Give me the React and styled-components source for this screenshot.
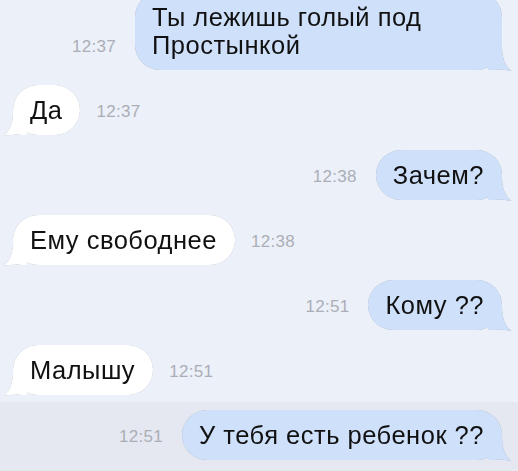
import styled, { createGlobalStyle } from 'styled-components';

const GlobalStyle = createGlobalStyle`
  html, body {
    margin: 0;
    padding: 0;
    background: #e5e8f0;
  }

  body {
    font-family: 'Liberation Sans', Arial, sans-serif;
  }
`;

const Screen = styled.div`
  display: flex;
  flex-direction: column;
  height: 471px;
  overflow: hidden;
`;

const Thread = styled.div`
  display: flex;
  flex-direction: column;
  gap: 15px;
  margin-top: -8px;
  padding: 0 16px 7px 13px;
  background: #ecf0f9;
`;

const Band = styled.div`
  flex: 1;
  display: flex;
  flex-direction: column;
  padding: 8px 16px 0 13px;
  background: #e5e8f0;
`;

const Row = styled.div`
  display: flex;
  align-items: flex-end;
  justify-content: ${({ $out }) => ($out ? 'flex-end' : 'flex-start')};
  gap: ${({ $out }) => ($out ? '19px' : '16px')};
`;

const Bubble = styled.div`
  position: relative;
  box-sizing: border-box;
  max-width: 367px;
  padding: 11px 18px 11px 17px;
  border-radius: 25px;
  font-size: 25.5px;
  line-height: 28px;
  letter-spacing: 0.5px;
  color: #111111;
  background: ${({ $out }) => ($out ? '#cfe0fa' : '#ffffff')};
  filter: drop-shadow(0 0 0.6px rgba(70, 80, 100, 0.45));
`;

const TailSvg = styled.svg`
  position: absolute;
  bottom: -1px;
  ${({ $out }) => ($out ? 'right: -10px;' : 'left: -10px; transform: scaleX(-1);')}
  width: 24px;
  height: 24px;
`;

const Time = styled.span`
  margin-bottom: 13px;
  font-size: 17px;
  line-height: 20px;
  letter-spacing: 0.3px;
  color: #abaeb6;
  white-space: nowrap;
`;

const Tail = ({ out }) => (
  <TailSvg $out={out} viewBox="0 0 24 24">
    <path
      d="M0 0 H14 C14 11 17 19 23.5 24 C18 23.6 12 21.8 6 23 L0 23 Z"
      fill={out ? '#cfe0fa' : '#ffffff'}
    />
  </TailSvg>
);

const Message = ({ out, time, children }) => {
  const bubble = (
    <Bubble $out={out}>
      {children}
      <Tail out={out} />
    </Bubble>
  );
  return (
    <Row $out={out}>
      {out ? (
        <>
          <Time>{time}</Time>
          {bubble}
        </>
      ) : (
        <>
          {bubble}
          <Time>{time}</Time>
        </>
      )}
    </Row>
  );
};

const messages = [
  { id: 1, out: true, time: '12:37', text: 'Ты лежишь голый под Простынкой' },
  { id: 2, out: false, time: '12:37', text: 'Да' },
  { id: 3, out: true, time: '12:38', text: 'Зачем?' },
  { id: 4, out: false, time: '12:38', text: 'Ему свободнее' },
  { id: 5, out: true, time: '12:51', text: 'Кому ??' },
  { id: 6, out: false, time: '12:51', text: 'Малышу' },
];

export default function App() {
  return (
    <Screen>
      <GlobalStyle />
      <Thread>
        {messages.map(m => (
          <Message key={m.id} out={m.out} time={m.time}>
            {m.text}
          </Message>
        ))}
      </Thread>
      <Band>
        <Message out time="12:51">
          У тебя есть ребенок ??
        </Message>
      </Band>
    </Screen>
  );
}
